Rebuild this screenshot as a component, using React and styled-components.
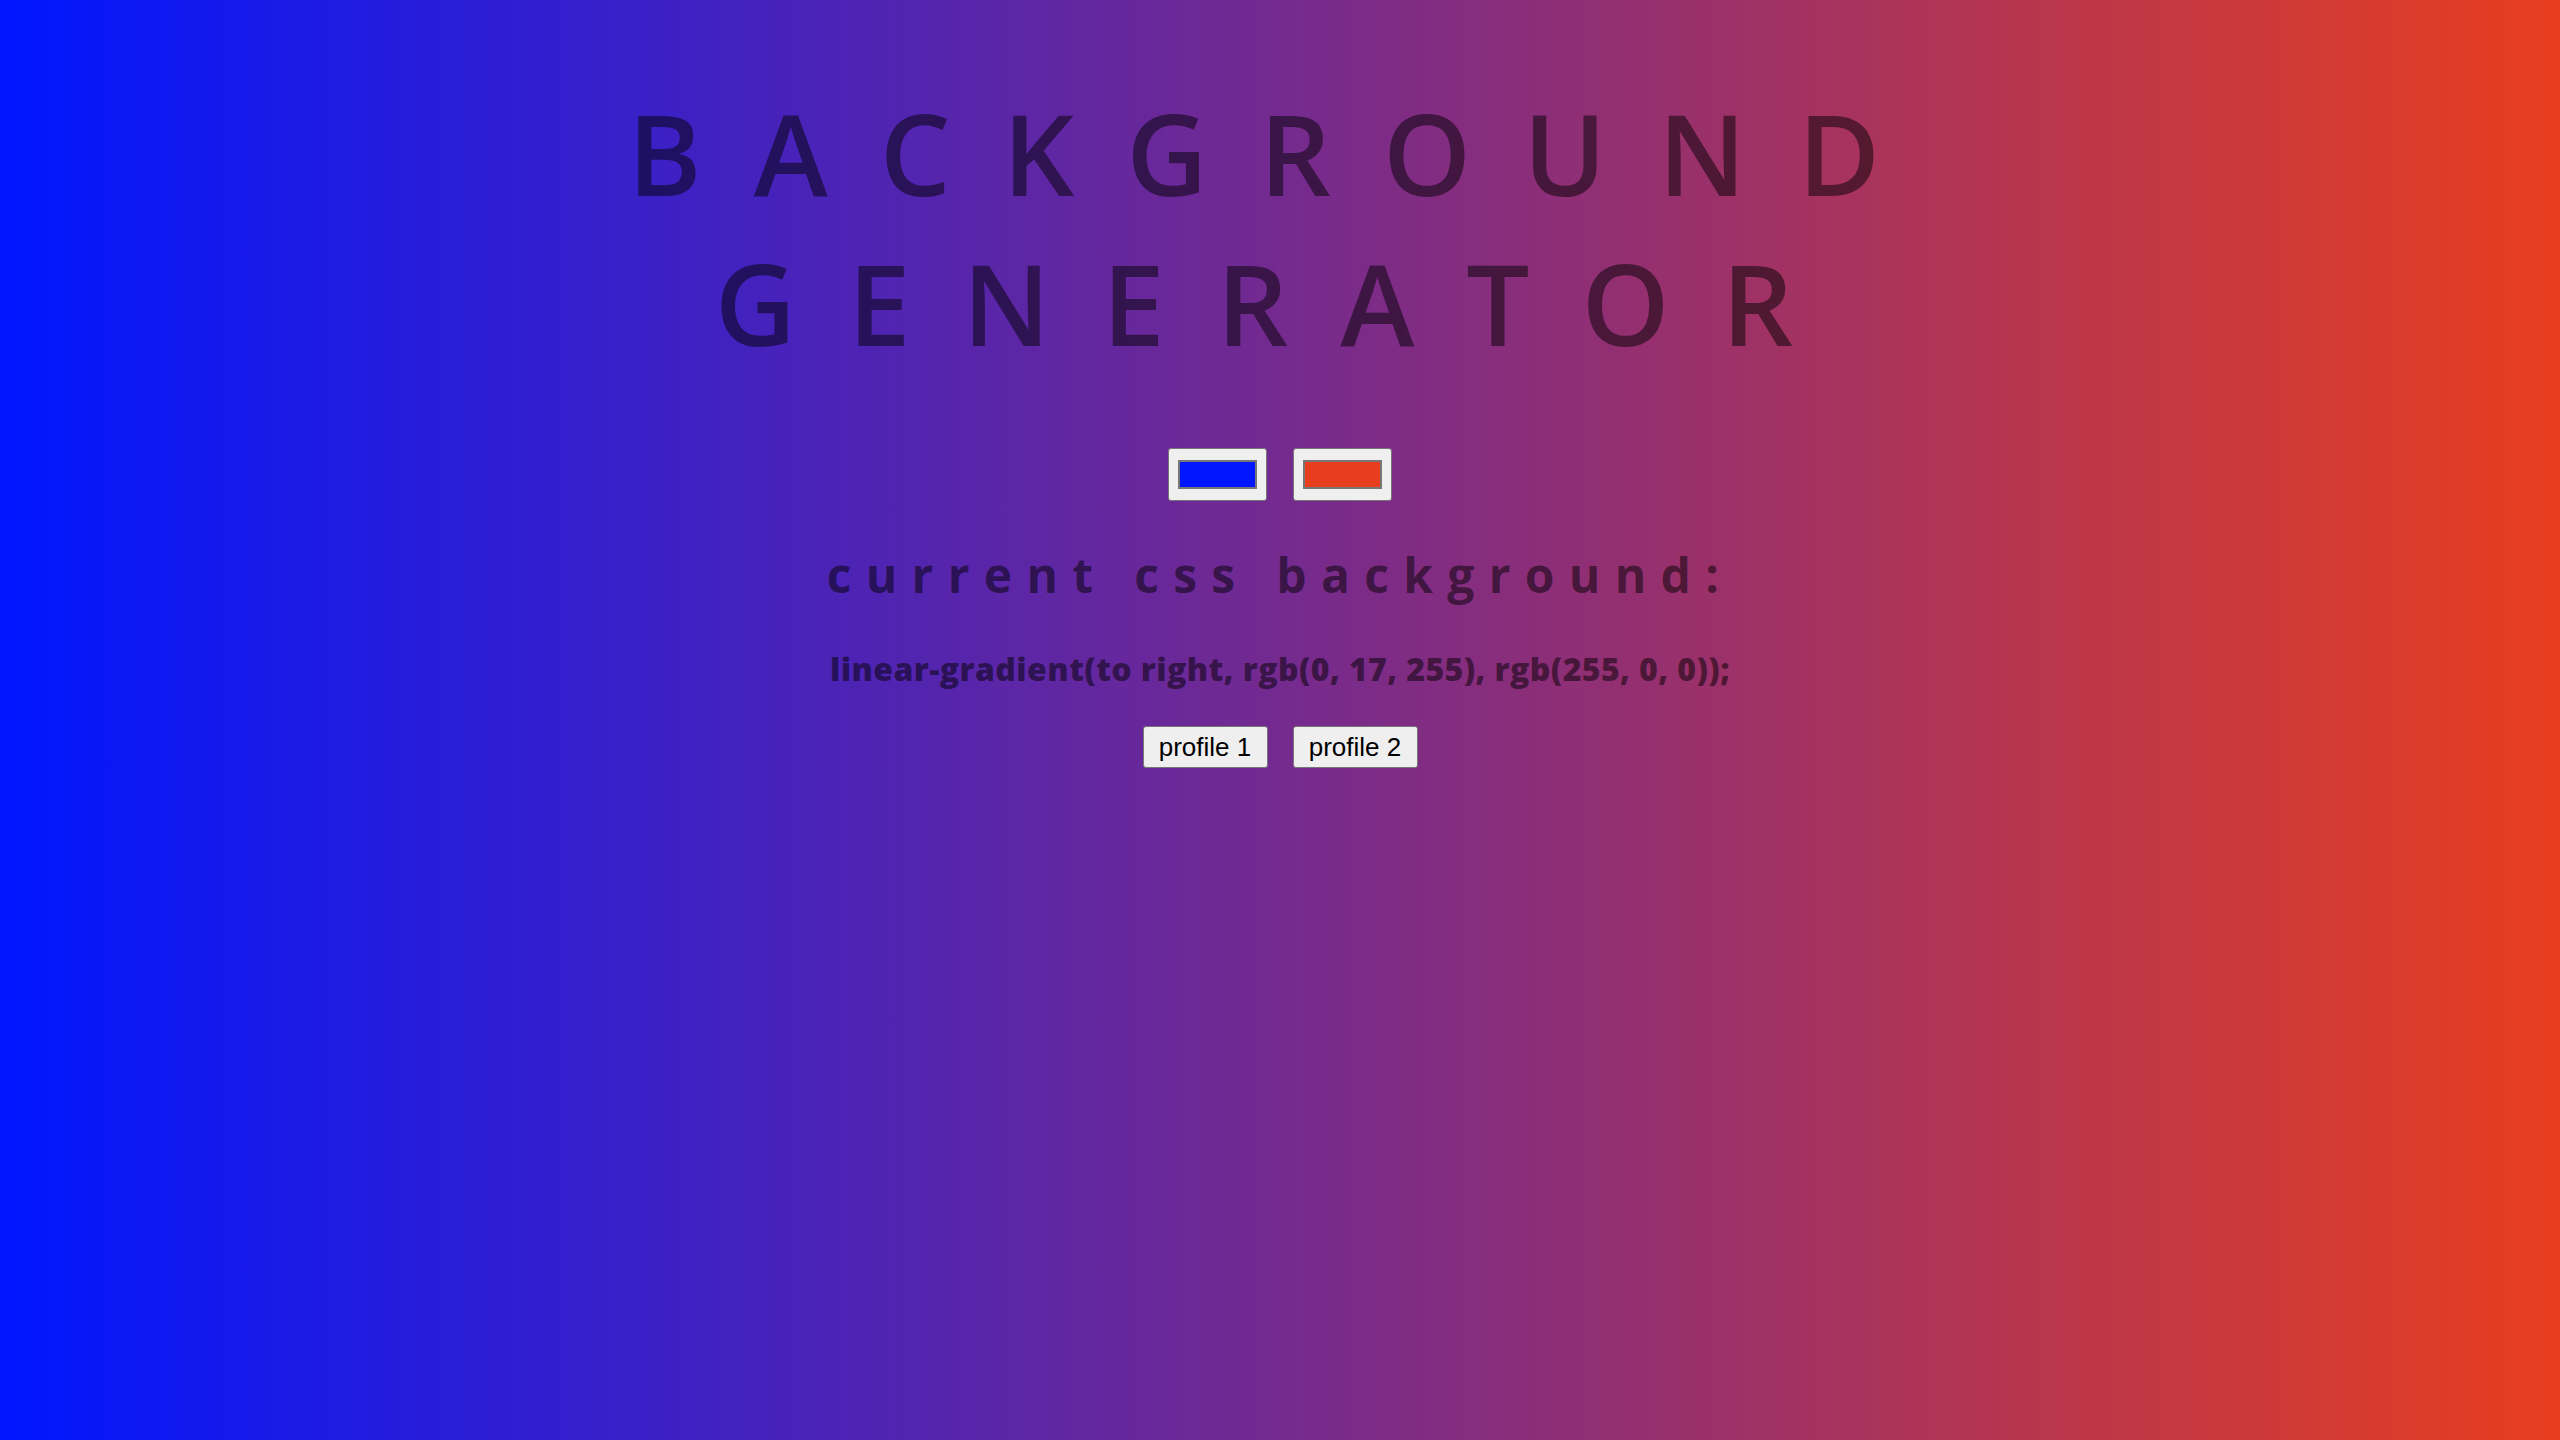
import React, { useState } from 'react'
import styled, { createGlobalStyle } from 'styled-components'

const profiles = [
    ['#0016ff', '#e83e1f'],
    ['#ff7a00', '#7b00ff'],
]

const toRgb = (hex) => {
    const n = parseInt(hex.slice(1), 16)
    return `rgb(${(n >> 16) & 255}, ${(n >> 8) & 255}, ${n & 255})`
}

export default function App() {
    const [colors, setColors] = useState(profiles[0])
    const [cssText, setCssText] = useState('linear-gradient(to right, rgb(0, 17, 255), rgb(255, 0, 0));')

    const update = (next) => {
        setColors(next)
        setCssText(`linear-gradient(to right, ${toRgb(next[0])}, ${toRgb(next[1])});`)
    }

    return <>
        <GlobalStyle $from={colors[0]} $to={colors[1]} />
        <Page>
            <Title>Background<br />Generator</Title>
            <Swatches>
                <ColorInput value={colors[0]} onChange={e => update([e.target.value, colors[1]])} />
                <ColorInput value={colors[1]} onChange={e => update([colors[0], e.target.value])} />
            </Swatches>
            <Heading>current css background:</Heading>
            <CssValue>{cssText}</CssValue>
            <Buttons>
                <ProfileButton type='button' onClick={() => update(profiles[0])}>profile 1</ProfileButton>
                <ProfileButton type='button' onClick={() => update(profiles[1])}>profile 2</ProfileButton>
            </Buttons>
        </Page>
    </>
}

const GlobalStyle = createGlobalStyle`
    html, body {
        margin: 0;
        padding: 0;
        min-height: 100%;
    }
    html {
        height: 100%;
    }
    body {
        background: linear-gradient(to right, ${p => p.$from}, ${p => p.$to});
        font-family: "Open Sans", "Liberation Sans", sans-serif;
        color: rgba(0, 0, 0, 0.5);
    }
`;

const Page = styled.main`
    display: flex;
    flex-direction: column;
    align-items: center;
    padding-top: 78px;
    text-align: center;
`;

const Title = styled.h1`
    margin: 0;
    font-size: 112px;
    font-weight: 600;
    line-height: 150px;
    letter-spacing: 52px;
    text-transform: uppercase;
`;

const Swatches = styled.div`
    display: flex;
    gap: 26px;
    margin-top: 70px;
`;

const ColorInput = styled.input.attrs({ type: 'color' })`
    -webkit-appearance: none;
    appearance: none;
    box-sizing: border-box;
    width: 99px;
    height: 53px;
    margin: 0;
    padding: 3px 5px;
    border: 1px solid #767676;
    border-radius: 3px;
    background: #efefef;
    cursor: pointer;

    &::-webkit-color-swatch-wrapper {
        padding: 8px 4px;
    }
    &::-webkit-color-swatch {
        border: 2px solid #777;
        border-radius: 0;
    }
`;

const Heading = styled.h2`
    margin: 42px 0 0;
    font-size: 48px;
    font-weight: 700;
    line-height: 64px;
    letter-spacing: 14.3px;
`;

const CssValue = styled.h3`
    margin: 40px 0 0;
    font-size: 32px;
    font-weight: 800;
    line-height: 44px;
    letter-spacing: 0.4px;
`;

const Buttons = styled.div`
    display: flex;
    gap: 25px;
    margin-top: 35px;
`;

const ProfileButton = styled.button`
    box-sizing: border-box;
    height: 42px;
    min-width: 125px;
    padding: 0 14px;
    font-family: "Liberation Sans", Arial, sans-serif;
    font-size: 26px;
    color: #000;
    background: #efefef;
    border: 1px solid #767676;
    border-radius: 3px;
    cursor: pointer;
`;
